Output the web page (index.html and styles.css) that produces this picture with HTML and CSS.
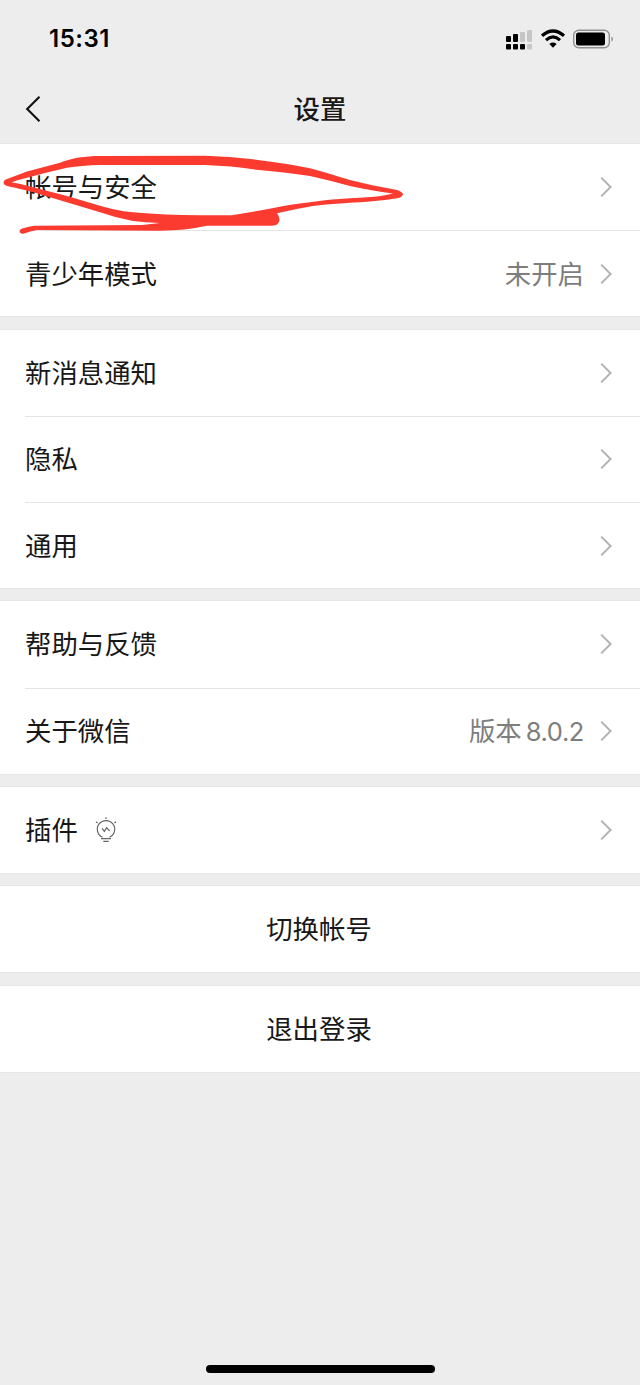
FILE: index.html
```
<!DOCTYPE html>
<html lang="zh-CN">
<head>
  <meta charset="UTF-8">
  <meta name="viewport" content="width=device-width, initial-scale=1.0">
  <title>设置</title>
  <link rel="stylesheet" href="styles.css">
</head>
<body>
  <svg width="0" height="0" class="defs">
    <symbol id="arrow" viewBox="0 0 12 22">
      <path d="M1.2 1.6 L10.6 11 L1.2 20.4" fill="none" stroke="#b2b2b2" stroke-width="2"/>
    </symbol>
  </svg>

  <header>
    <div class="status">
      <span class="time">15:31</span>
      <svg class="status-icons" width="110" height="24" viewBox="0 0 110 24">
        <g fill="#000">
          <rect x="2" y="9" width="5" height="6" rx="1"/>
          <rect x="9" y="7" width="5" height="8" rx="1"/>
          <rect x="2" y="17" width="5" height="5.500" rx="1"/>
          <rect x="9" y="17" width="5" height="5.500" rx="1"/>
          <rect x="16" y="17" width="5" height="5.500" rx="1"/>
        </g>
        <g fill="#c6c6c6">
          <rect x="16" y="5" width="5" height="10" rx="1"/>
          <rect x="23" y="3" width="5" height="12" rx="1"/>
          <rect x="23" y="17" width="5" height="5.500" rx="1"/>
        </g>
        <g fill="none" stroke="#000" stroke-width="3.2">
          <path d="M38 8.8 Q49 -0.8 60 8.8"/>
          <path d="M42 13.1 Q49 6.700 56 13.1"/>
        </g>
        <path d="M45.400 17 Q49 14.100 52.600 17 L49 20.800 Z"/>
        <rect x="69.700" y="3.200" width="35.600" height="17.600" rx="5" fill="none" stroke="#929292" stroke-width="1.4"/>
        <rect x="72" y="5.500" width="29" height="13" rx="2.5"/>
        <path d="M107.400 9.200 Q110.600 12 107.400 14.800 Z" fill="#929292"/>
      </svg>
    </div>
    <div class="navbar">
      <svg class="back" width="16" height="28" viewBox="0 0 16 28">
        <path d="M14.5 1.8 L2.2 14 L14.5 26.2" fill="none" stroke="#111" stroke-width="2.1"/>
      </svg>
      <h1>设置</h1>
    </div>
  </header>

  <main>
    <section class="group">
      <div class="row marked">
        <span class="label">帐号与安全</span>
        <svg class="arrow"><use href="#arrow"/></svg>
        <svg class="scribble" width="420" height="96" viewBox="0 0 420 96">
          <path fill="#fb3b30" fill-rule="evenodd" d="M3.5 39 Q3.500 36 7 35 L27 27.500 L60 18.700 C72 14 85 12 100 12 L205 11.700 Q230 12.500 253 15.300 Q285 19 310 24.300 C325 28 338 32.500 350 36 C365 40 382 43 397 46 Q403 48 403 50.500 Q402 53.500 397 54.300 Q382 57 367 57.700 C350 59 330 59.500 313 62 Q295 65 277 69.300 Q279.500 72 279.500 76 Q279 81.700 272 81.700 L207 81.700 Q185 86.500 160 86.700 L37 86 Q30 87 24 89.500 Q20 90.500 19.500 87 Q20 85 23 84.300 Q32 81.500 35 81.700 L142 81 L160 79 Q145 78.500 133 77 Q116 74 100 68.300 L50 53.300 C35 48.500 24 45.500 10 42.700 Q4 41.500 3.500 39 Z M11.700 38.300 Q22 40 33 43.300 L67 52 L100 61.700 C112 65 120 67 133 68.300 Q165 71.300 200 71.300 L232 71.300 L267 65.300 Q290 60.500 310 58.300 C330 55 350 54.500 367 53.300 Q382 52.500 393 49.500 C378 47.500 365 45 350 42 Q330 36.500 310 32 Q285 28 253 25.300 Q232 22 205 21 L100 21 Q82 21.500 67 23.700 Q46 28.500 27 33.700 Q17 36 11.700 38.300 Z"/>
        </svg>
      </div>
      <div class="row">
        <span class="label">青少年模式</span>
        <span class="value">未开启</span>
        <svg class="arrow"><use href="#arrow"/></svg>
      </div>
    </section>

    <section class="group">
      <div class="row">
        <span class="label">新消息通知</span>
        <svg class="arrow"><use href="#arrow"/></svg>
      </div>
      <div class="row">
        <span class="label">隐私</span>
        <svg class="arrow"><use href="#arrow"/></svg>
      </div>
      <div class="row">
        <span class="label">通用</span>
        <svg class="arrow"><use href="#arrow"/></svg>
      </div>
    </section>

    <section class="group">
      <div class="row">
        <span class="label">帮助与反馈</span>
        <svg class="arrow"><use href="#arrow"/></svg>
      </div>
      <div class="row">
        <span class="label">关于微信</span>
        <span class="value">版本<span class="version">8.0.2</span></span>
        <svg class="arrow"><use href="#arrow"/></svg>
      </div>
    </section>

    <section class="group">
      <div class="row">
        <span class="label">插件</span>
        <svg class="bulb" width="22" height="26" viewBox="0 0 22 26" fill="none" stroke="#666" stroke-width="1.2">
          <path d="M7.500 20.200 A8.700 8.700 0 1 1 14.500 20.200"/>
          <path d="M6 21.700 H16 M8.300 24.300 H13.700"/>
          <path d="M7 11.300 L9.400 14.400 L11.700 10.800 L14.600 13.800"/>
          <path d="M11 0.300 V2 M1 4.700 L2.500 6 M21 4.700 L19.500 6"/>
        </svg>
        <svg class="arrow"><use href="#arrow"/></svg>
      </div>
    </section>

    <section class="group">
      <div class="row center"><span class="label">切换帐号</span></div>
    </section>

    <section class="group">
      <div class="row center"><span class="label">退出登录</span></div>
    </section>
  </main>

  <div class="home-bar"></div>
</body>
</html>
```
FILE: styles.css
```
* {
  box-sizing: border-box;
}
body {
  margin: 0;
  height: 1385px;
  display: flex;
  flex-direction: column;
  overflow: hidden;
  background: #ededed;
  color: #181818;
  font-family: "Noto Sans CJK SC", sans-serif;
  font-size: 26.4px;
}
.defs {
  position: absolute;
}
header {
  height: 144px;
}
.status {
  display: flex;
  justify-content: space-between;
  align-items: center;
  height: 77px;
  padding: 0 26px 0 49px;
}
.time {
  color: #000;
  font-family: Inter, sans-serif;
  font-size: 24px;
  font-weight: 600;
  letter-spacing: 0.5px;
}
.navbar {
  display: grid;
  grid-template-columns: 1fr auto 1fr;
  align-items: center;
  height: 63px;
}
.back {
  margin-left: 25px;
}
h1 {
  margin: 0;
  padding-bottom: 3px;
  font-size: 26.4px;
  font-weight: 500;
}
main {
  display: flex;
  flex-direction: column;
  gap: 13.2px;
}
.group {
  background: #fff;
  box-shadow: 0 0 0 1px #e6e6e6;
}
.row {
  display: flex;
  align-items: center;
  height: 86.2px;
  margin-left: 25px;
  padding-right: 28px;
}
.row + .row {
  border-top: 1px solid #e5e5e5;
}
.row.center {
  justify-content: center;
  margin-left: 0;
  padding-right: 2px;
}
.label,
.value {
  padding-bottom: 3px;
}
.value {
  margin-left: auto;
  color: #7d7d7d;
}
.version {
  margin-left: 4px;
  font-family: Inter, sans-serif;
  font-size: 25.5px;
  letter-spacing: -0.4px;
}
.arrow {
  width: 12px;
  height: 22px;
  margin-left: auto;
}
.value + .arrow {
  margin-left: 16px;
}
.bulb {
  margin-left: 17px;
}
/* red pen mark drawn over the first row */
.marked {
  position: relative;
}
.scribble {
  position: absolute;
  left: -25px;
  top: 0;
}
.home-bar {
  width: 229px;
  height: 8px;
  margin: auto auto 12px 206px;
  border-radius: 4px;
  background: #000;
}
```
